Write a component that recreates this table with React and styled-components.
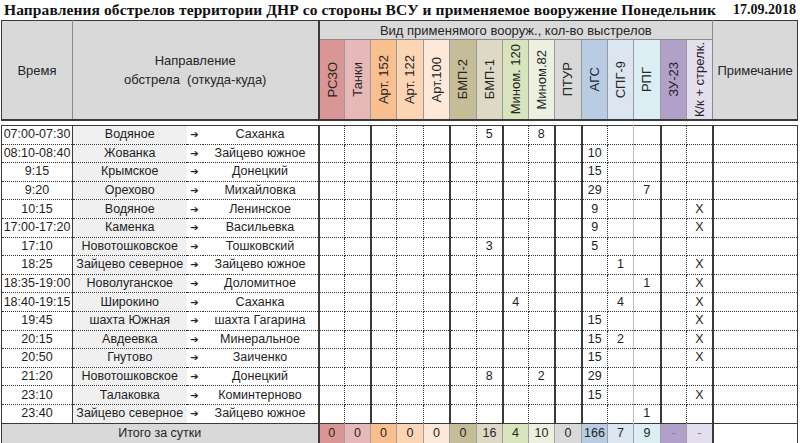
import React from 'react';
import styled, { createGlobalStyle } from 'styled-components';

const GlobalStyle = createGlobalStyle`
  html, body {
    margin: 0;
    padding: 0;
    background: #ffffff;
  }
  body {
    width: 800px;
    height: 443px;
    overflow: hidden;
    font-family: 'Liberation Sans', Arial, sans-serif;
    color: #1e1e1e;
  }
`;

const Page = styled.div`
  width: 800px;
  padding-left: 1px;
  box-sizing: border-box;
`;

const TitleBar = styled.div`
  height: 20px;
  display: flex;
  align-items: center;
  justify-content: space-between;
  padding: 0 4px 0 3px;
  font-family: 'Liberation Serif', 'Times New Roman', serif;
  font-weight: bold;
  color: #111;
`;

const Title = styled.div`
  font-size: 15.5px;
  letter-spacing: 0.1px;
  white-space: nowrap;
`;

const DateText = styled.div`
  font-size: 14px;
`;

const Sheet = styled.table`
  width: 796px;
  table-layout: fixed;
  border-collapse: collapse;
  font-size: 12.5px;
`;

const HeadCell = styled.th`
  background: ${p => p.$bg || '#d9d9d9'};
  border: 1px solid #8a8a8a;
  border-top: 1.5px solid #3a3a3a;
  font-weight: normal;
  font-size: 13px;
  color: #262626;
  padding: 0;
  height: ${p => p.$h || 18}px;
  text-align: center;
  vertical-align: middle;
  &.outer-l { border-left: 1.5px solid #3a3a3a; }
  &.outer-r { border-right: 1.5px solid #3a3a3a; }
  &.low { border-bottom: 2px solid #3a3a3a; }
`;

const WeaponHead = styled.th`
  background: ${p => p.$bg};
  border: 1px solid #9a9a9a;
  border-bottom: 2px solid #3a3a3a;
  padding: 0;
  height: 79px;
  font-weight: normal;
  color: #262626;
  vertical-align: middle;
`;

const Vertical = styled.div`
  writing-mode: vertical-rl;
  transform: rotate(180deg);
  margin: 0 auto;
  white-space: nowrap;
  line-height: 26px;
  font-size: 13px;
`;

const HeadLines = styled.div`
  line-height: 19px;
`;

const Spacer = styled.td`
  height: 4px;
  padding: 0;
  border: none;
`;

const Row = styled.tr`
  height: 18.6px;
`;

const Cell = styled.td`
  padding: 0;
  text-align: center;
  vertical-align: middle;
  white-space: nowrap;
  overflow: hidden;
  border-top: 1px dotted #333;
  border-bottom: 1px dotted #333;
  border-left: ${p => p.$left || 'none'};
  border-right: ${p => p.$right || 'none'};
  background: ${p => p.$bg || 'transparent'};
  line-height: 17px;
  &.first { border-top: 1.5px solid #3a3a3a; }
`;

const Arrow = styled.span`
  font-family: 'DejaVu Sans', sans-serif;
  font-size: 10px;
  font-weight: bold;
  color: #222;
`;

const TotalCell = styled.td`
  padding: 0;
  height: 19px;
  text-align: center;
  vertical-align: middle;
  background: ${p => p.$bg || '#ffffff'};
  color: ${p => p.$color || '#262626'};
  border: 1px solid #a0a0a0;
  border-top: 1.5px solid #3a3a3a;
  border-bottom: 1.5px solid #3a3a3a;
  &.label {
    background: #d9d9d9;
    border-left: 1.5px solid #3a3a3a;
    border-right: 2px solid #3a3a3a;
  }
  &.note {
    border-left: 2px solid #3a3a3a;
    border-right: 1.5px solid #3a3a3a;
  }
`;

const SOLID = '2px solid #3a3a3a';
const DOT = '1px dotted #333';
const LIGHT = '1px solid #bdbdbd';

const weapons = [
  { name: 'РСЗО', bg: '#da9694', w: 26, right: DOT },
  { name: 'Танки', bg: '#e6b8b7', w: 26, right: SOLID },
  { name: 'Арт. 152', bg: '#fabf8f', w: 26, right: DOT },
  { name: 'Арт. 122', bg: '#fcd5b4', w: 27, right: DOT },
  { name: 'Арт.100', bg: '#fde9d9', w: 26, right: SOLID },
  { name: 'БМП-2', bg: '#c4bd97', w: 27, right: DOT },
  { name: 'БМП-1', bg: '#ddd9c4', w: 26, right: SOLID },
  { name: 'Мином. 120', bg: '#d8e4bc', w: 26, right: DOT },
  { name: 'Мином.82', bg: '#ebf1de', w: 26, right: SOLID },
  { name: 'ПТУР', bg: '#d9d9d9', w: 27, right: SOLID },
  { name: 'АГС', bg: '#b8cce4', w: 26, right: DOT },
  { name: 'СПГ-9', bg: '#dce6f1', w: 26, right: LIGHT },
  { name: 'РПГ', bg: '#daeef3', w: 27, right: SOLID },
  { name: 'ЗУ-23', bg: '#b1a0c7', w: 26, right: DOT },
  { name: 'К/к  +  стрелк.', bg: '#e4dfec', w: 26, right: SOLID },
];

// indexes: 0 РСЗО .. 6 БМП-1, 7 Мин120, 8 Мин82, 10 АГС, 11 СПГ-9, 12 РПГ, 14 К/к
const rows = [
  ['07:00-07:30', 'Водяное', 'Саханка', { 6: '5', 8: '8' }],
  ['08:10-08:40', 'Жованка', 'Зайцево южное', { 10: '10' }],
  ['9:15', 'Крымское', 'Донецкий', { 10: '15' }],
  ['9:20', 'Орехово', 'Михайловка', { 10: '29', 12: '7' }],
  ['10:15', 'Водяное', 'Ленинское', { 10: '9', 14: 'X' }],
  ['17:00-17:20', 'Каменка', 'Васильевка', { 10: '9', 14: 'X' }],
  ['17:10', 'Новотошковское', 'Тошковский', { 6: '3', 10: '5' }],
  ['18:25', 'Зайцево северное', 'Зайцево южное', { 11: '1', 14: 'X' }],
  ['18:35-19:00', 'Новолуганское', 'Доломитное', { 12: '1', 14: 'X' }],
  ['18:40-19:15', 'Широкино', 'Саханка', { 7: '4', 11: '4', 14: 'X' }],
  ['19:45', 'шахта Южная', 'шахта Гагарина', { 10: '15', 14: 'X' }],
  ['20:15', 'Авдеевка', 'Минеральное', { 10: '15', 11: '2', 14: 'X' }],
  ['20:50', 'Гнутово', 'Заиченко', { 10: '15', 14: 'X' }],
  ['21:20', 'Новотошковское', 'Донецкий', { 6: '8', 8: '2', 10: '29' }],
  ['23:10', 'Талаковка', 'Коминтерново', { 10: '15', 14: 'X' }],
  ['23:40', 'Зайцево северное', 'Зайцево южное', { 12: '1' }],
];

const totals = ['0', '0', '0', '0', '0', '0', '16', '4', '10', '0', '166', '7', '9', '-', '-'];

export default function App() {
  return (
    <Page>
      <GlobalStyle />
      <TitleBar>
        <Title>Направления обстрелов территории ДНР со стороны ВСУ и применяемое вооружение Понедельник</Title>
        <DateText>17.09.2018</DateText>
      </TitleBar>
      <Sheet>
        <colgroup>
          <col style={{ width: 71 }} />
          <col style={{ width: 114 }} />
          <col style={{ width: 16 }} />
          <col style={{ width: 116 }} />
          {weapons.map(w => (
            <col key={w.name} style={{ width: w.w }} />
          ))}
          <col style={{ width: 85 }} />
        </colgroup>
        <thead>
          <tr>
            <HeadCell rowSpan={2} className="outer-l low">Время</HeadCell>
            <HeadCell rowSpan={2} colSpan={3} className="low" style={{ borderRight: SOLID }}>
              <HeadLines>
                Направление
                <br />
                обстрела&nbsp;&nbsp;(откуда-куда)
              </HeadLines>
            </HeadCell>
            <HeadCell colSpan={15} $h={18}>Вид применямого вооруж., кол-во выстрелов</HeadCell>
            <HeadCell rowSpan={2} className="outer-r low">Примечание</HeadCell>
          </tr>
          <tr>
            {weapons.map(w => (
              <WeaponHead key={w.name} $bg={w.bg}>
                <Vertical>{w.name}</Vertical>
              </WeaponHead>
            ))}
          </tr>
        </thead>
        <tbody>
          <tr>
            <Spacer colSpan={20} />
          </tr>
          {rows.map(([time, from, to, vals], i) => (
            <Row key={time + from}>
              <Cell
                className={i === 0 ? 'first' : undefined}
                $left="1.5px solid #3a3a3a"
                $right="1.5px solid #3a3a3a"
              >
                {time}
              </Cell>
              <Cell className={i === 0 ? 'first' : undefined} $bg="#f0f0f0">
                {from}
              </Cell>
              <Cell className={i === 0 ? 'first' : undefined}>
                <Arrow>➔</Arrow>
              </Cell>
              <Cell className={i === 0 ? 'first' : undefined} $right={SOLID}>
                {to}
              </Cell>
              {weapons.map((w, j) => (
                <Cell
                  key={w.name}
                  className={i === 0 ? 'first' : undefined}
                  $right={w.right}
                >
                  {vals[j] || ''}
                </Cell>
              ))}
              <Cell
                className={i === 0 ? 'first' : undefined}
                $left={SOLID}
                $right="1.5px solid #3a3a3a"
              />
            </Row>
          ))}
          <tr>
            <TotalCell colSpan={4} className="label">Итого за сутки</TotalCell>
            {weapons.map((w, j) => (
              <TotalCell
                key={w.name}
                $bg={w.bg}
                $color={totals[j] === '-' ? '#8a7aa8' : '#262626'}
              >
                {totals[j]}
              </TotalCell>
            ))}
            <TotalCell className="note" />
          </tr>
        </tbody>
      </Sheet>
    </Page>
  );
}
